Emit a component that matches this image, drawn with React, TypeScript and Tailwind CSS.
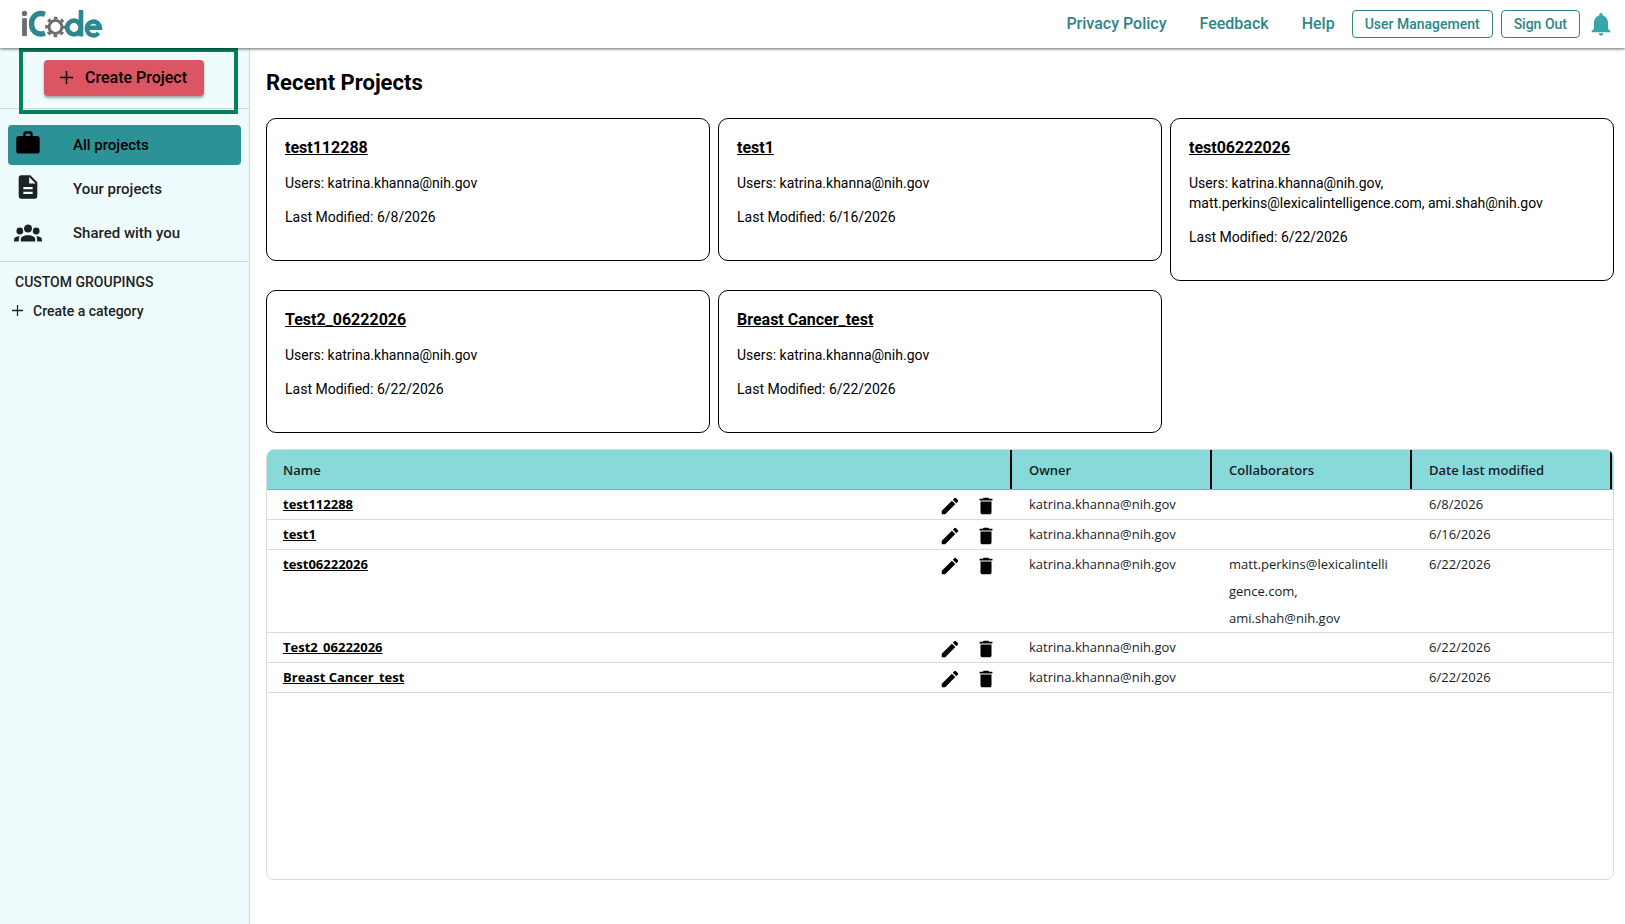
import type { ReactNode } from "react";
import { MdDelete, MdDescription, MdEdit, MdNotifications, MdWork } from "react-icons/md";

// ── Types ──────────────────────────────────────────────────────

interface Project {
  name: string;
  owner: string;
  collaborators: string[];
  modified: string;
}

// ── Data ───────────────────────────────────────────────────────

const OWNER = "katrina.khanna@nih.gov";

const PROJECTS: Project[] = [
  { name: "test112288", owner: OWNER, collaborators: [], modified: "6/8/2026" },
  { name: "test1", owner: OWNER, collaborators: [], modified: "6/16/2026" },
  {
    name: "test06222026",
    owner: OWNER,
    collaborators: ["matt.perkins@lexicalintelligence.com", "ami.shah@nih.gov"],
    modified: "6/22/2026",
  },
  { name: "Test2_06222026", owner: OWNER, collaborators: [], modified: "6/22/2026" },
  { name: "Breast Cancer_test", owner: OWNER, collaborators: [], modified: "6/22/2026" },
];

const COLUMNS = ["Name", "Owner", "Collaborators", "Date last modified"];

// ── Page ───────────────────────────────────────────────────────

export default function App() {
  return (
    <div className="flex min-h-screen flex-col bg-white font-['Roboto',sans-serif] text-black">
      <TopBar />
      <div className="flex grow">
        <Sidebar />
        <main className="flex min-w-0 grow flex-col px-4 pt-[21px] pr-[11px] pb-11">
          <h1 className="text-[22px] leading-7 font-bold">Recent Projects</h1>
          <section className="mt-[21px] grid grid-cols-3 items-start gap-x-2 gap-y-[9px]">
            {PROJECTS.map((project) => (
              <ProjectCard key={project.name} project={project} />
            ))}
          </section>
          <ProjectTable />
        </main>
      </div>
    </div>
  );
}

// ── Sub-components ─────────────────────────────────────────────

function TopBar() {
  return (
    <header className="relative z-10 flex h-12 items-center justify-between bg-white pr-[10px] pl-[21px] shadow-[0_1px_3px_rgba(0,0,0,0.6)]">
      <a href="#home" aria-label="iCode">
        <Logo />
      </a>
      <nav className="flex items-center text-base font-medium text-[#2d8589]">
        <a href="#privacy">Privacy Policy</a>
        <a href="#feedback" className="ml-[33px]">Feedback</a>
        <a href="#help" className="ml-[33px]">Help</a>
        <OutlineButton>User Management</OutlineButton>
        <OutlineButton>Sign Out</OutlineButton>
        <button type="button" aria-label="Notifications" className="ml-[7px]">
          <MdNotifications className="size-7 text-[#35a7ac]" />
        </button>
      </nav>
    </header>
  );
}

function OutlineButton({ children }: { children: ReactNode }) {
  return (
    <button
      type="button"
      className="ml-2 h-7 rounded border border-[#2d8589] px-3 text-sm font-medium first-of-type:ml-[17px]"
    >
      {children}
    </button>
  );
}

function Logo() {
  return (
    <svg width="82" height="28" viewBox="0 0 82 28" fill="none">
      <circle cx="3.5" cy="3.5" r="2.7" fill="#6b6d70" />
      <path d="M3.5 8.2V26" stroke="#6b6d70" strokeWidth="4.8" />
      <path d="M24 4.3C16 1.5 10.6 6.6 10.6 13.8S16 26 24 23.3" stroke="#2d888c" strokeWidth="5.4" />
      <circle cx="34.5" cy="17" r="6.4" stroke="#6b6d70" strokeWidth="3" />
      <circle
        cx="34.5"
        cy="17"
        r="8.9"
        stroke="#6b6d70"
        strokeWidth="2.8"
        strokeDasharray="3.5 3.49"
        strokeDashoffset="1.75"
      />
      <circle cx="53" cy="17.5" r="6.8" stroke="#2d888c" strokeWidth="4.8" />
      <path d="M60 0V26.5" stroke="#2d888c" strokeWidth="4.6" />
      <path d="M66 17.8H79A6.6 7 0 1 0 77.5 23" stroke="#2d888c" strokeWidth="4.4" />
    </svg>
  );
}

function PlusIcon({ className }: { className: string }) {
  return (
    <svg viewBox="0 0 13 13" fill="none" className={className}>
      <path d="M6.5 0V13M0 6.5H13" stroke="currentColor" strokeWidth="1.5" />
    </svg>
  );
}

function PeopleIcon() {
  return (
    <svg width="28" height="18" viewBox="0 0 28 18" fill="currentColor">
      <circle cx="5.8" cy="7" r="3.4" />
      <circle cx="22.2" cy="7" r="3.4" />
      <circle cx="14" cy="4.6" r="4.6" stroke="#effcfd" strokeWidth="1.2" />
      <path d="M6.7 17.4V15.6C6.7 13 9.5 11.2 14 11.2S21.3 13 21.3 15.6V17.4Z" />
      <path d="M0 17.4V16C0 13.6 2 12.3 5.8 12.3C5 13.5 4.8 14.6 4.8 17.4Z" />
      <path d="M28 17.4V16C28 13.6 26 12.3 22.2 12.3C23 13.5 23.2 14.6 23.2 17.4Z" />
    </svg>
  );
}

function Sidebar() {
  return (
    <aside className="w-[250px] shrink-0 border-r border-[#ccdadb] bg-[#effcfd] text-[#1f2223]">
      <div className="h-[61px] border-b border-[#ccdadb] pl-[19px]">
        {/* highlight frame hangs slightly over the divider */}
        <div className="relative h-[66px] w-[219px] border-4 border-[#008359] pt-2 pl-[21px]">
          <button
            type="button"
            className="flex h-9 items-center gap-3 rounded bg-[#dc5563] pr-[17px] pl-4 text-base font-medium text-black shadow-[0_2px_3px_rgba(0,0,0,0.35)]"
          >
            <PlusIcon className="mb-[2px] size-[13px]" />
            Create Project
          </button>
        </div>
      </div>

      <nav className="flex flex-col gap-1 border-b border-[#ccdadb] px-2 pt-4 pb-2 text-[15px] font-medium">
        <NavItem icon={<MdWork className="mb-1 size-7" />} label="All projects" active />
        <NavItem icon={<MdDescription className="mb-1 size-7" />} label="Your projects" />
        <NavItem icon={<PeopleIcon />} label="Shared with you" />
      </nav>

      <h2 className="mt-[10px] pl-[15px] text-sm font-medium">CUSTOM GROUPINGS</h2>
      <button type="button" className="mt-[9px] flex items-center gap-[10px] pl-3 text-sm font-medium">
        <PlusIcon className="mb-[2px] size-[11px]" />
        Create a category
      </button>
    </aside>
  );
}

function NavItem({ icon, label, active }: { icon: ReactNode; label: string; active?: boolean }) {
  return (
    <a
      href="#projects"
      className={`flex h-10 items-center gap-[31px] rounded pl-[6px] ${
        active ? "bg-[#2d9297] text-black" : ""
      }`}
    >
      {icon}
      {label}
    </a>
  );
}

function ProjectCard({ project }: { project: Project }) {
  const users = [project.owner, ...project.collaborators].join(", ");

  return (
    <article className="rounded-[10px] border border-black px-[18px] pt-[17px] pb-[33px]">
      <h3 className="text-base leading-6 font-bold">
        <a href="#project" className="underline">{project.name}</a>
      </h3>
      <p className="mt-[13px] text-sm leading-5">{`Users: ${users}`}</p>
      <p className="mt-[14px] text-sm leading-5">{`Last Modified: ${project.modified}`}</p>
    </article>
  );
}

function ProjectTable() {
  return (
    <section className="mt-4 grow overflow-hidden rounded-lg border border-[#d9dcde] font-['Open_Sans',sans-serif] text-[13px] text-[#181d1f]">
      <table className="w-full table-fixed border-collapse text-left">
        <colgroup>
          <col />
          <col className="w-[200px]" />
          <col className="w-[200px]" />
          <col className="w-[200px]" />
        </colgroup>
        <thead>
          <tr className="h-[39px] border-b border-[#70b8ba] bg-[#87d9da]">
            {COLUMNS.map((column) => (
              <th key={column} scope="col" className="relative px-4 pt-[2px] font-semibold">
                {column}
                <span className="absolute top-0 right-px h-full w-[2px] bg-black" />
              </th>
            ))}
          </tr>
        </thead>
        <tbody>
          {PROJECTS.map((project) => (
            <ProjectRow key={project.name} project={project} />
          ))}
        </tbody>
      </table>
    </section>
  );
}

function ProjectRow({ project }: { project: Project }) {
  return (
    <tr className="h-[30px] border-b border-[#d9dcde] align-top leading-[27px]">
      <td className="px-4 pt-px">
        <div className="flex items-center justify-between">
          <a href="#project" className="font-bold text-black underline">{project.name}</a>
          <div className="flex gap-[14px] pt-[3px] text-black">
            <button type="button" aria-label={`Edit ${project.name}`}>
              <MdEdit className="size-[22px]" />
            </button>
            <button type="button" aria-label={`Delete ${project.name}`}>
              <MdDelete className="size-[22px]" />
            </button>
          </div>
        </div>
      </td>
      <td className="pt-px pr-5 pl-4">{project.owner}</td>
      <td className="pt-px pr-5 pl-4 wrap-anywhere">{project.collaborators.join(", ")}</td>
      <td className="pt-px pr-5 pl-4">{project.modified}</td>
    </tr>
  );
}
